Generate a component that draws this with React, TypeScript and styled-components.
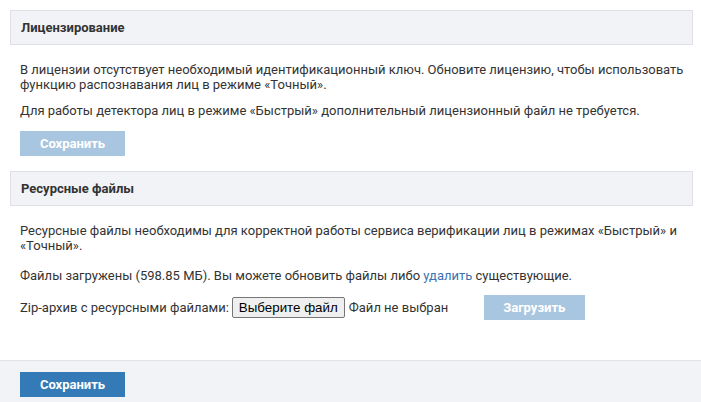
import styled, { createGlobalStyle } from "styled-components"

const GlobalStyle = createGlobalStyle`
  html, body {
    margin: 0;
    padding: 0;
    background: #fff;
  }
  body {
    font-family: Roboto, "Noto Sans", Arial, sans-serif;
    font-size: 13px;
    color: #333;
  }
`

const Page = styled.div`
  display: flex;
  flex-direction: column;
  width: 701px;
  height: 402px;
  overflow: hidden;
`

const Content = styled.div`
  flex: 1;
  padding: 10px 8px 0 10px;
`

const SectionHeader = styled.div`
  height: 33px;
  display: flex;
  align-items: center;
  padding: 0 10px;
  background: #f2f3f7;
  border: 1px solid #dfe1e6;
  font-weight: 700;
  font-size: 13px;
  color: #333;
`

const SectionBody = styled.div`
  padding: 17px 0 15px 10px;
`

const Text = styled.p<{ $gap?: number }>`
  margin: 0 0 ${(p) => p.$gap ?? 11}px 0;
  line-height: 15px;
`

const Link = styled.a`
  color: #3a73b0;
  text-decoration: none;
  cursor: pointer;
`

const Button = styled.button<{ $disabled?: boolean; $width?: number }>`
  height: 25px;
  width: ${(p) => p.$width ?? 105}px;
  padding: 0;
  border: none;
  border-radius: 0;
  background: ${(p) => (p.$disabled ? "#a9c6e1" : "#337ab7")};
  color: #fff;
  font-family: Roboto, "Noto Sans", Arial, sans-serif;
  font-size: 13px;
  font-weight: 700;
  cursor: ${(p) => (p.$disabled ? "default" : "pointer")};
`

const UploadRow = styled.div`
  display: flex;
  align-items: center;
  margin-top: 12px;
`

const FileLabel = styled.span`
  margin-right: 3px;
`

const FileButton = styled.label`
  display: inline-flex;
  align-items: center;
  height: 19px;
  padding: 0 6px;
  border: 1px solid #767676;
  border-radius: 2px;
  background: #efefef;
  color: #000;
  font-family: "Liberation Sans", Arial, sans-serif;
  font-size: 13.33px;
  cursor: pointer;
`

const FileName = styled.span`
  margin-left: 4px;
  width: 135px;
`

const Footer = styled.div`
  flex-shrink: 0;
  height: 30px;
  display: flex;
  align-items: flex-start;
  padding: 11px 20px 0 20px;
  background: #f2f3f7;
  border-top: 1px solid #e0e2e7;
`

export default function App() {
  return (
    <Page>
      <GlobalStyle />
      <Content>
        <SectionHeader>Лицензирование</SectionHeader>
        <SectionBody>
          <Text>
            В лицензии отсутствует необходимый идентификационный ключ. Обновите лицензию, чтобы использовать функцию распознавания лиц в режиме «Точный».
          </Text>
          <Text $gap={13}>
            Для работы детектора лиц в режиме «Быстрый» дополнительный лицензионный файл не требуется.
          </Text>
          <Button $disabled>Сохранить</Button>
        </SectionBody>

        <SectionHeader>Ресурсные файлы</SectionHeader>
        <SectionBody>
          <Text $gap={15}>
            Ресурсные файлы необходимы для корректной работы сервиса верификации лиц в режимах «Быстрый» и «Точный».
          </Text>
          <Text $gap={0}>
            Файлы загружены (598.85 МБ). Вы можете обновить файлы либо <Link>удалить</Link> существующие.
          </Text>
          <UploadRow>
            <FileLabel>Zip-архив с ресурсными файлами:</FileLabel>
            <FileButton>Выберите файл</FileButton>
            <FileName>Файл не выбран</FileName>
            <Button $disabled $width={101}>Загрузить</Button>
          </UploadRow>
        </SectionBody>
      </Content>
      <Footer>
        <Button>Сохранить</Button>
      </Footer>
    </Page>
  )
}
